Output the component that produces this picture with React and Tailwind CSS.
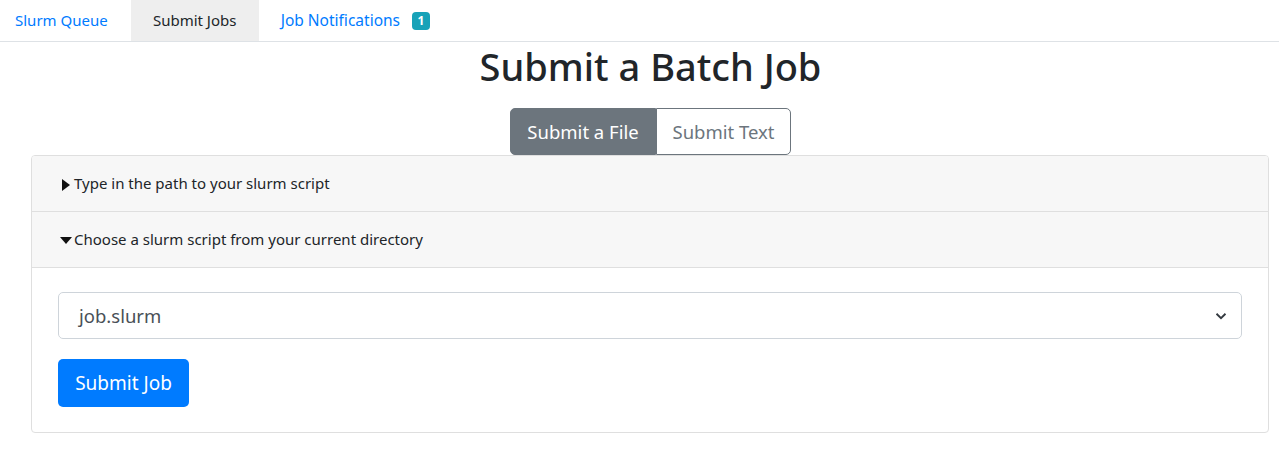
import React from "react";

const font = { fontFamily: '"Noto Sans", "Open Sans", sans-serif' };

export default function App() {
  return (
    <div className="w-[1279px] h-[462px] bg-white text-[#212529]" style={font}>
      <nav className="flex h-[42px] border-b border-[#dee2e6] text-[15px]">
        <a className="flex items-center pl-[15px] pr-[23px] text-[#007bff]">Slurm Queue</a>
        <a className="flex items-center w-[128px] justify-center bg-[#eeeeee] text-[#212529]">Submit Jobs</a>
        <a className="flex items-center pl-[22px] text-[#007bff]">
          <span className="text-[15.5px]">Job Notifications</span>
          <span className="ml-[12px] inline-flex items-center justify-center w-[18px] h-[18px] rounded-[4px] bg-[#17a2b8] text-white text-[12px] font-bold leading-none">1</span>
        </a>
      </nav>
      <div className="pl-[22px]">
        <h1 className="text-center text-[38px] font-medium leading-[48px] mt-[0px] mb-[18px]">Submit a Batch Job</h1>
        <div className="flex justify-center">
          <div className="flex text-[18.5px]">
            <button className="h-[47px] w-[146px] flex items-center justify-center bg-[#6c757d] text-white border border-[#6c757d] rounded-l-[5px]">Submit a File</button>
            <button className="h-[47px] w-[135px] flex items-center justify-center bg-white text-[#6c757d] border border-[#6c757d] rounded-r-[5px]">Submit Text</button>
          </div>
        </div>
      </div>
      <div className="ml-[31px] w-[1238px] border border-[#dfdfdf] rounded-[4px] overflow-hidden">
        <div className="h-[56px] bg-[#f7f7f7] border-b border-[#dfdfdf] flex items-center pl-[30px] text-[15px]">
          <svg width="8" height="12" viewBox="0 0 8 12" className="mr-[4px] mt-[2px]"><path d="M0 0L8 6L0 12Z" fill="#111" /></svg>
          Type in the path to your slurm script
        </div>
        <div className="h-[56px] bg-[#f7f7f7] border-b border-[#dfdfdf] flex items-center pl-[28px] text-[15px]">
          <svg width="12" height="7" viewBox="0 0 12 7" className="mr-[2px] mt-[2px]"><path d="M0 0L12 0L6 7Z" fill="#111" /></svg>
          Choose a slurm script from your current directory
        </div>
        <div className="px-[26px] pt-[24px] pb-[25px]">
          <div className="h-[47px] border border-[#ced4da] rounded-[5px] flex items-center justify-between pl-[20px] pr-[14px] text-[18.5px] text-[#495057]">
            <span>job.slurm</span>
            <svg width="12" height="12" viewBox="0 0 16 16"><path d="M2 5l6 6 6-6" fill="none" stroke="#343a40" strokeWidth="2.5" /></svg>
          </div>
          <button className="mt-[20px] h-[48px] w-[131px] bg-[#007bff] text-white text-[19px] rounded-[5px]">Submit Job</button>
        </div>
      </div>
    </div>
  );
}
